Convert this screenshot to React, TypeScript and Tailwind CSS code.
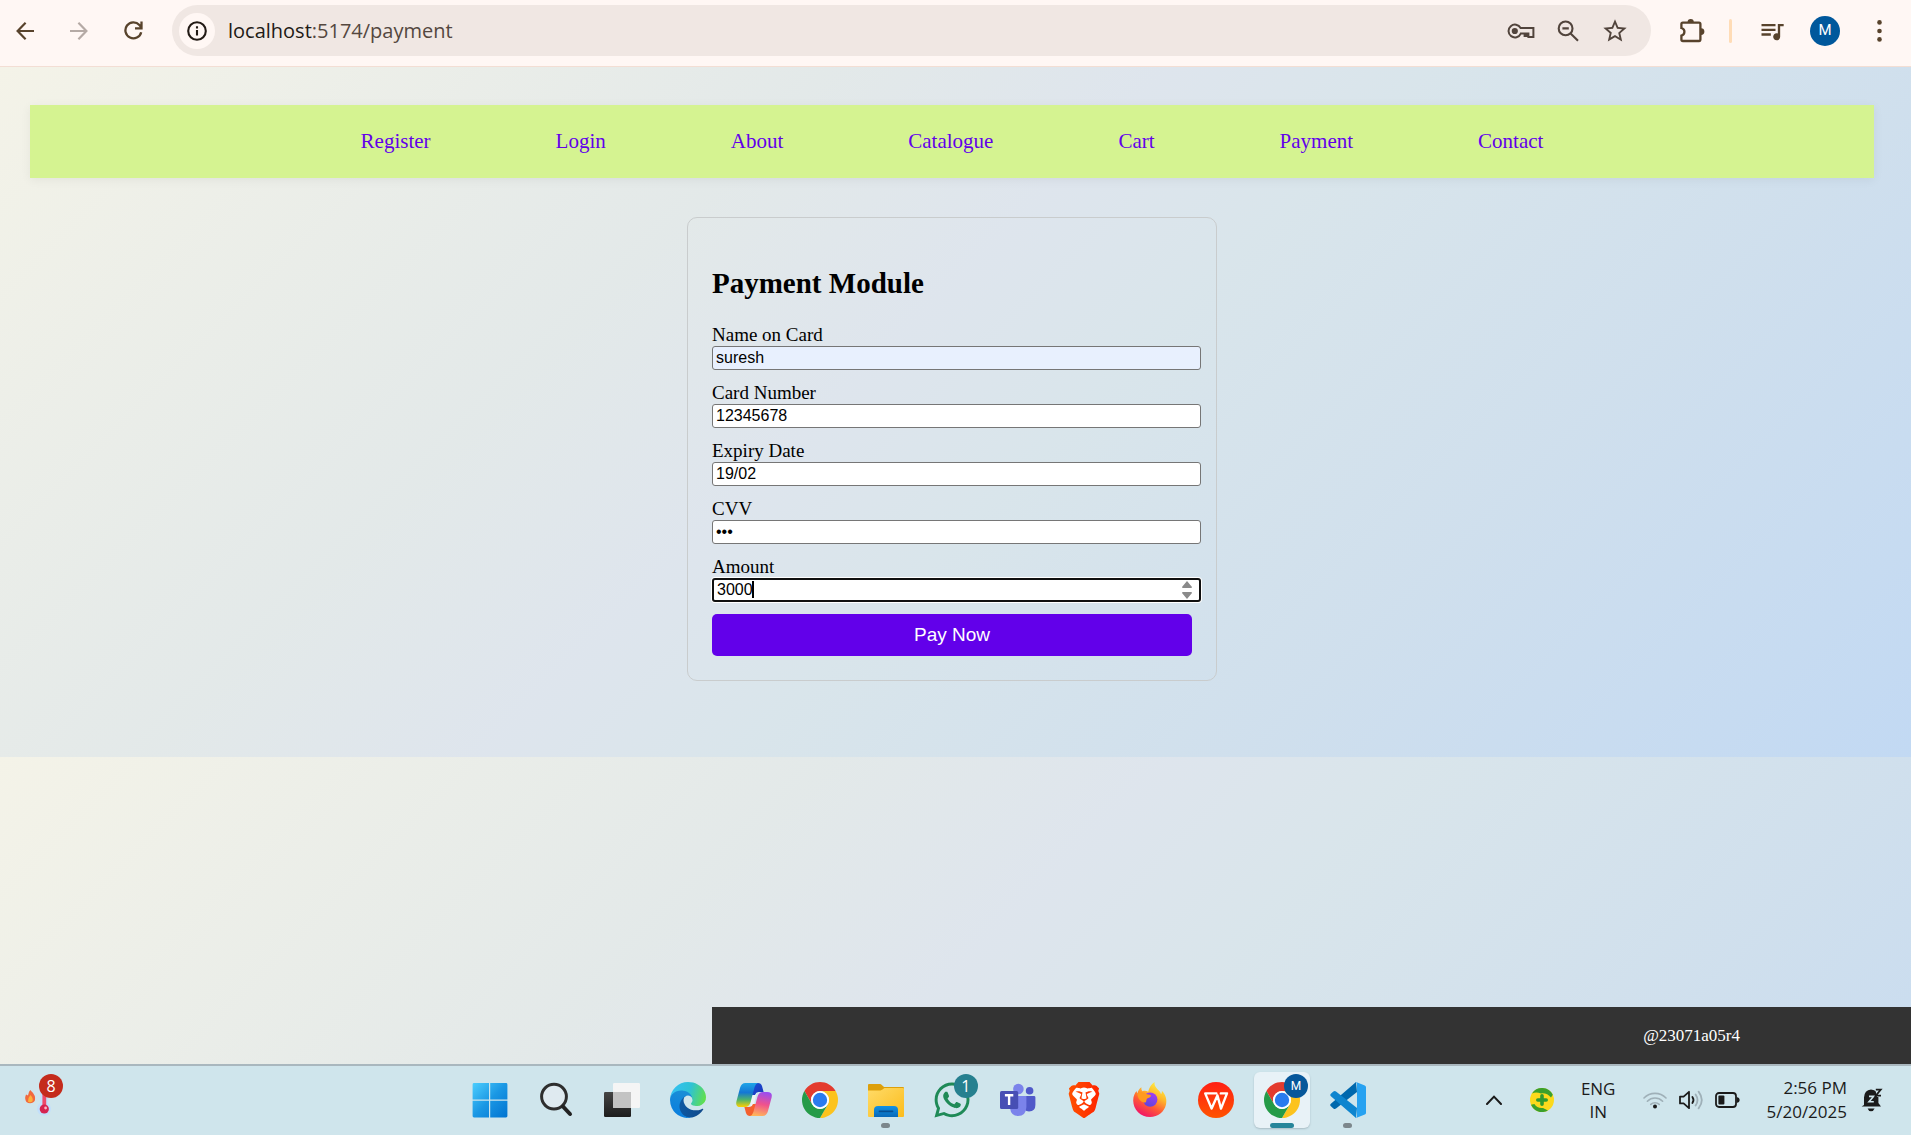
import { useState } from 'react';
import type { ReactNode } from 'react';
import { FaWhatsapp } from 'react-icons/fa';
import { SiBrave } from 'react-icons/si';
import { MdQueueMusic, MdStarBorder } from 'react-icons/md';

const links = ['Register', 'Login', 'About', 'Catalogue', 'Cart', 'Payment', 'Contact'];

const fields = [
  { id: 'name', label: 'Name on Card', type: 'text', value: 'suresh', look: 'bg-[#e8f0fe] border border-[#767676]' },
  { id: 'number', label: 'Card Number', type: 'text', value: '12345678', look: 'bg-white border border-[#767676]' },
  { id: 'expiry', label: 'Expiry Date', type: 'text', value: '19/02', look: 'bg-white border border-[#767676]' },
  { id: 'cvv', label: 'CVV', type: 'password', value: '123', look: 'bg-white border border-[#767676]' },
  { id: 'amount', label: 'Amount', type: 'number', value: '3000', look: 'bg-white border-2 border-[#101010] ring-1 ring-white' },
];

function ChromeLogo() {
  return (
    <svg viewBox="0 0 48 48" className="size-9">
      <path d="M24 12H44.78A24 24 0 0 0 3.22 12L13.61 30A12 12 0 0 1 24 12" fill="#e33b2e" />
      <path d="M24 12H44.78A24 24 0 0 1 24 48L34.39 30A12 12 0 0 0 24 12" fill="#fcc31e" />
      <path d="M13.61 30L3.22 12A24 24 0 0 0 24 48L34.39 30A12 12 0 0 1 13.61 30" fill="#259b48" />
      <circle cx="24" cy="24" r="12" fill="#fff" />
      <circle cx="24" cy="24" r="9.6" fill="#2a7bee" />
    </svg>
  );
}

function WindowsLogo() {
  return (
    <svg viewBox="0 0 36 36" className="size-9">
      <defs>
        <linearGradient id="win" x1="0" y1="0" x2="36" y2="36" gradientUnits="userSpaceOnUse">
          <stop stopColor="#4fd0ff" />
          <stop offset="0.5" stopColor="#1a97e4" />
          <stop offset="1" stopColor="#0072d0" />
        </linearGradient>
      </defs>
      <path
        d="M2 1H17V17.4H.6V2.4Q.6 1 2 1ZM18.2 1H34Q35.4 1 35.4 2.4V17.4H18.2ZM.6 18.8H17V35.4H2Q.6 35.4 .6 34ZM18.2 18.8H35.4V34Q35.4 35.4 34 35.4H18.2Z"
        fill="url(#win)"
      />
    </svg>
  );
}

function SearchLogo() {
  return (
    <svg viewBox="0 0 36 36" className="size-9" fill="none">
      <circle cx="16" cy="14.6" r="12.4" fill="#dfeaf0" stroke="#2e2e2e" strokeWidth="3" />
      <path d="M25 24.5L32 32" stroke="#222" strokeWidth="4" strokeLinecap="round" />
    </svg>
  );
}

function TaskViewLogo() {
  return (
    <svg viewBox="0 0 36 36" className="size-9">
      <defs>
        <linearGradient id="tv" x1="0" y1="0" x2="0" y2="1">
          <stop stopColor="#454545" />
          <stop offset="1" stopColor="#1c1c1c" />
        </linearGradient>
      </defs>
      <rect x="0" y="10" width="27" height="25" rx="1.2" fill="url(#tv)" />
      <rect x="9" y="1" width="27" height="25" rx="1.2" fill="#f5f5f5" />
      <path d="M9 10H27V26H10Q9 26 9 25Z" fill="#c3c3c3" />
    </svg>
  );
}

function EdgeLogo() {
  return (
    <svg viewBox="4.63 4.92 256 256" className="size-9">
      <defs>
        <linearGradient id="ea" x1="60" y1="180" x2="240" y2="180" gradientUnits="userSpaceOnUse">
          <stop stopColor="#0c59a4" />
          <stop offset="1" stopColor="#114a8b" />
        </linearGradient>
        <linearGradient id="eb" x1="120" y1="60" x2="60" y2="240" gradientUnits="userSpaceOnUse">
          <stop stopColor="#1b8fd6" />
          <stop offset="1" stopColor="#0a7fde" />
        </linearGradient>
        <linearGradient id="ec" x1="20" y1="60" x2="255" y2="130" gradientUnits="userSpaceOnUse">
          <stop stopColor="#35c1f1" />
          <stop offset="0.5" stopColor="#2fc2d4" />
          <stop offset="1" stopColor="#62e04a" />
        </linearGradient>
      </defs>
      <path fill="url(#ea)" d="M235.68 195.46a93.73 93.73 0 0 1-10.54 4.71 101.87 101.87 0 0 1-35.9 6.46c-47.32 0-88.54-32.55-88.54-74.32A31.48 31.48 0 0 1 117.13 105c-42.8 1.8-53.8 46.4-53.8 72.53 0 73.88 68.09 81.37 82.76 81.37 7.91 0 19.84-2.3 27-4.56l1.31-.44a128.34 128.34 0 0 0 66.6-52.8 4 4 0 0 0-5.32-5.64Z" />
      <path fill="url(#eb)" d="M110.34 246.34A79.2 79.2 0 0 1 87.6 225a80.72 80.72 0 0 1 29.53-120c3.12-1.47 8.45-4.13 15.54-4a32.35 32.35 0 0 1 25.69 13 31.88 31.88 0 0 1 6.36 18.66c0-.21 24.46-79.6-80-79.6-43.9 0-80 41.66-80 78.21a130.15 130.15 0 0 0 12.11 56 128 128 0 0 0 156.38 67.11 75.55 75.55 0 0 1-62.78-8Z" />
      <path fill="url(#ec)" d="M156.94 153.78c-.81 1.05-3.3 2.5-3.3 5.66 0 2.61 1.7 5.12 4.72 7.23 14.38 10 41.49 8.68 41.56 8.68a59.56 59.56 0 0 0 30.27-8.35 61.38 61.38 0 0 0 30.43-52.88c.26-22.41-8-37.31-11.34-43.91C228.09 28.76 182.35 4.92 132.61 4.92a128 128 0 0 0-128 126.2c.48-36.54 36.8-66.05 80-66.05 3.5 0 23.46.34 42 10.07 16.34 8.58 24.9 18.94 30.85 29.21 6.18 10.67 7.28 24.15 7.28 29.52s-2.74 13.33-7.8 19.91Z" />
    </svg>
  );
}

function CopilotLogo() {
  return (
    <svg viewBox="0 0 36 36" className="size-9">
      <defs>
        <linearGradient id="ca" x1="0" y1="0" x2="0" y2="1">
          <stop stopColor="#1fa5e8" />
          <stop offset="0.4" stopColor="#1477d4" />
          <stop offset="0.7" stopColor="#4fb46a" />
          <stop offset="1" stopColor="#ffd000" />
        </linearGradient>
        <linearGradient id="cb" x1="0.6" y1="0" x2="0.4" y2="1">
          <stop stopColor="#9a4df0" />
          <stop offset="0.5" stopColor="#f0528c" />
          <stop offset="1" stopColor="#ffb45a" />
        </linearGradient>
        <linearGradient id="cc" x1="0" y1="0" x2="1" y2="1">
          <stop stopColor="#1a50d8" />
          <stop offset="1" stopColor="#1b36b8" />
        </linearGradient>
      </defs>
      <path d="M16 11H20.6L17.4 25H14Z" fill="#eef3f7" />
      <path d="M17 1H22Q25 1 26 4L27.6 10H22.4Q20 10 19 13H15Z" fill="url(#cc)" />
      <path d="M19 34H14Q11 34 10 31L8.4 25H13.6Q16 25 17 22H21Z" fill="#f4602e" />
      <path d="M9.4 1H22Q19.6 1.6 18.6 5L14.6 20Q13.2 25 9 25H4.6Q-.8 25 .4 19.6L4 6Q5.4 1 9.4 1Z" fill="url(#ca)" />
      <path d="M26.6 34H14Q16.4 33.4 17.4 30L21.4 15Q22.8 10 27 10H31.4Q36.8 10 35.6 15.4L32 29Q30.6 34 26.6 34Z" fill="url(#cb)" />
    </svg>
  );
}

function FolderLogo() {
  return (
    <svg viewBox="0 0 36 36" className="size-9">
      <defs>
        <linearGradient id="fo" x1="0" y1="0" x2="1" y2="1">
          <stop stopColor="#ffdb68" />
          <stop offset="1" stopColor="#fbbc1c" />
        </linearGradient>
        <linearGradient id="fb" x1="0" y1="0" x2="0" y2="1">
          <stop stopColor="#1292e4" />
          <stop offset="1" stopColor="#0968b8" />
        </linearGradient>
      </defs>
      <path d="M0 3Q0 2 1 2H12Q13 2 13.8 3L16 5H35Q36 5 36 6V14H0Z" fill="#dd9f0a" />
      <path d="M0 8.4H12.5Q13.6 8.4 14.5 7.6L16.4 6H35Q36 6 36 7V34Q36 35 35 35H1Q0 35 0 34Z" fill="url(#fo)" />
      <path d="M6 35V28Q6 24 10 24H26Q30 24 30 28V35Z" fill="url(#fb)" />
      <path d="M11.5 29.3H24.5" stroke="#074f92" strokeWidth="1.8" strokeLinecap="round" />
    </svg>
  );
}

function TeamsLogo() {
  return (
    <svg viewBox="0 0 36 36" className="size-9">
      <circle cx="29.6" cy="8.8" r="3.8" fill="#5059c9" />
      <path d="M25 14H34Q35.4 14 35.4 15.4V23Q35.4 29.4 29 29.4Q26 29.4 25 28Z" fill="#5059c9" />
      <circle cx="18.4" cy="7" r="5.3" fill="#7b83eb" />
      <path d="M10 14H26.4V25Q26 34 18 34Q11 34 10 26Z" fill="#7b83eb" />
      <rect x="0" y="9" width="18.2" height="18" rx="1.6" fill="#474fb4" />
      <path d="M4.9 13.2H13.3M9.1 13.2V23" stroke="#fff" strokeWidth="2.4" />
    </svg>
  );
}

function BraveLogo() {
  return (
    <div className="relative grid size-9 place-items-center">
      <svg viewBox="0 0 36 36" className="absolute size-9">
        <defs>
          <linearGradient id="br" x1="0" y1="0" x2="24" y2="0" gradientUnits="userSpaceOnUse">
            <stop stopColor="#ff5500" />
            <stop offset="1" stopColor="#ff2000" />
          </linearGradient>
        </defs>
        <path d="M10 4H26L30 10L27 25L18 32L9 25L6 10Z" fill="#fff" />
      </svg>
      <SiBrave className="relative size-9" fill="url(#br)" />
    </div>
  );
}

function FirefoxLogo() {
  return (
    <svg viewBox="0 0 36 36" className="size-9">
      <defs>
        <linearGradient id="fa" x1="28" y1="2" x2="10" y2="34" gradientUnits="userSpaceOnUse">
          <stop stopColor="#fff044" />
          <stop offset="0.35" stopColor="#ffb52a" />
          <stop offset="0.65" stopColor="#ff5a36" />
          <stop offset="1" stopColor="#f01268" />
        </linearGradient>
        <linearGradient id="fp" x1="0.8" y1="0" x2="0.3" y2="1">
          <stop stopColor="#a63df2" />
          <stop offset="1" stopColor="#5b45dc" />
        </linearGradient>
      </defs>
      <path
        d="M22.6 0C22 3.5 24 5.8 26.8 8.4C28.2 9.8 28.8 11 29 12.2C30 11 30 9.6 29.8 8.8C34 13 35 18 34 22.6C32.4 30 26 35 18 35C8.6 35 1.2 27.6 1.2 18.4C1.2 14 3 10.6 4.6 9C4.7 10 5 10.8 5.4 11.4C6 8.6 7.6 6.4 9.4 5.2C9.2 7 9.6 8.4 10.6 9.2C12.6 8.6 14.6 8.8 16.2 9.8C17 5.6 19.6 1.8 22.6 0Z"
        fill="url(#fa)"
      />
      <circle cx="18.2" cy="17.6" r="7.2" fill="url(#fp)" />
      <path d="M5.4 11.4C8 9.4 11.6 10 13.4 11.6C15.4 13 18.6 12.2 19 13.8C19 15.6 15.4 15.8 14.6 17.4C13.8 19.6 14.8 20.6 12.4 20.4C8 19.8 5.6 16 5.4 11.4Z" fill="#ff9a1f" />
    </svg>
  );
}

function WpsLogo() {
  return (
    <svg viewBox="0 0 36 36" className="size-9" fill="none">
      <defs>
        <linearGradient id="wp" x1="0" y1="0" x2="0" y2="1">
          <stop stopColor="#ff1f14" />
          <stop offset="1" stopColor="#ff5300" />
        </linearGradient>
      </defs>
      <circle cx="18" cy="18" r="18" fill="url(#wp)" />
      <path d="M18.4 11.4H7.2L13.6 26.6L19.4 13.4L23 26.6L29 11.4H22.8" stroke="#fff" strokeWidth="2.4" strokeLinejoin="round" strokeLinecap="round" />
    </svg>
  );
}

function CodeLogo() {
  return (
    <svg viewBox="0 0 36 36" className="size-9">
      <path d="M26 0L27 10L6 26.6Q4.8 27.6 3.4 26.5L.9 24.2Q-.4 22.9 .9 21.7Z" fill="#0068ad" />
      <path d="M26 36L27 26L6 9.4Q4.8 8.4 3.4 9.5L.9 11.8Q-.4 13.1 .9 14.3Z" fill="#0e85cf" />
      <path d="M26 0L34.8 3.4Q36 4 36 5.3V30.7Q36 32 34.8 32.6L26 36Q27 35 27 33.5V2.5Q27 1 26 0Z" fill="#27a2f1" />
    </svg>
  );
}

function TaskItem({ name, children, running, active, badge }: { name: string; children: ReactNode; running?: boolean; active?: boolean; badge?: ReactNode }) {
  return (
    <li className="flex w-[66px] justify-center">
      <button
        type="button"
        aria-label={name}
        className={active ? 'relative grid size-14 place-items-center rounded-md bg-[#e8f2f7] shadow-[0_1px_2px_#a9bcc4]' : 'relative grid size-14 place-items-center'}
      >
        {children}
        {badge}
        {active && <span className="absolute bottom-0 h-[5px] w-6 rounded-full bg-[#26859a]" />}
        {running && <span className="absolute bottom-0 h-[5px] w-[9px] rounded-full bg-[#7c878c]" />}
      </button>
    </li>
  );
}

function BrowserBar() {
  return (
    <header className="flex h-[67px] shrink-0 items-center border-b border-[#f3ded4] bg-[#fff7f4] pt-[5px] pb-[10px] pl-4 font-['Open_Sans',sans-serif]">
      <div className="flex w-[156px] items-center gap-9">
        <button type="button" aria-label="Back">
          <svg viewBox="0 0 18 18" className="size-[18px]" fill="none" stroke="#58432c" strokeWidth="2.2"><path d="M9.6 .8L1.6 9L9.6 17.2M1.8 9H18" /></svg>
        </button>
        <button type="button" aria-label="Forward">
          <svg viewBox="0 0 18 18" className="size-[18px]" fill="none" stroke="#b5aaa5" strokeWidth="2.2"><path d="M8.4 .8L16.4 9L8.4 17.2M16.2 9H0" /></svg>
        </button>
        <button type="button" aria-label="Reload">
          <svg viewBox="0 0 19 19" className="size-[19px]" fill="none" stroke="#58432c" strokeWidth="2.3"><path d="M17.2 11.2A8 8 0 1 1 15.4 4L17 6M11 7.3H17.5V.4" /></svg>
        </button>
      </div>
      <div className="flex h-[51px] flex-1 items-center rounded-full bg-[#f0e7e3] pr-[22px] pl-[7px]">
        <button type="button" aria-label="Site information" className="grid size-9 place-items-center rounded-full bg-[#fff7f4]">
          <svg viewBox="0 0 20 20" className="size-5" fill="none" stroke="#221a15" strokeWidth="2.1"><circle cx="10" cy="10" r="8.8" /><path d="M10 9V14.6M10 5.2V7.4" /></svg>
        </button>
        <div className="flex-1 pl-[13px] text-[20px] leading-7 text-[#54473f]">
          <span className="text-[#221a15]">localhost</span>:5174/payment
        </div>
        <div className="flex items-center gap-[22px] text-[#51443c]">
          <button type="button" aria-label="Passwords">
            <svg viewBox="0 0 28 16" className="h-4 w-7" fill="none" stroke="#51443c" strokeWidth="2"><path d="M13.6 5H26.4V14H21.4V10.6H19.4V13H17.6V10.6H13.8A6.4 6.4 0 1 1 13.6 5Z" /><circle cx="7.8" cy="8" r="3.1" fill="#51443c" stroke="none" /></svg>
          </button>
          <button type="button" aria-label="Zoom">
            <svg viewBox="0 0 22 22" className="size-[22px]" fill="none" stroke="#51443c" strokeWidth="2.1"><circle cx="8.6" cy="8.4" r="6.9" /><path d="M5.4 8.4H11.8M13.6 13.4L21 20.8" /></svg>
          </button>
          <button type="button" aria-label="Bookmark"><MdStarBorder className="size-7" /></button>
        </div>
      </div>
      <div className="flex items-center pl-7 text-[#58432c]">
        <button type="button" aria-label="Extensions">
          <svg viewBox="0 0 26 26" className="size-[26px]"><path d="M3.8 4.6H20Q21.4 4.6 21.4 6V21.6Q21.4 23 20 23H4Q2.4 23 2.4 21.4V17.6A3.9 3.9 0 0 0 2.4 10V6Q2.4 4.6 3.8 4.6Z" fill="none" stroke="#58432c" strokeWidth="2.3" /><path d="M8.6 4A3.1 3.1 0 0 1 14.8 4ZM22 10.2A3 3 0 0 1 22 17Z" fill="#58432c" /></svg>
        </button>
        <span className="ml-6 h-6 w-[3px] rounded-full bg-[#ffdcb6]" />
        <button type="button" aria-label="Media" className="ml-[26px]"><MdQueueMusic className="size-7" /></button>
        <button type="button" aria-label="Profile" className="ml-6 grid size-[30px] place-items-center rounded-full bg-[#00589c] font-['Roboto',sans-serif] text-[15px] text-white">M</button>
        <button type="button" aria-label="Menu" className="mr-[29px] ml-[37px]">
          <svg viewBox="0 0 5 22" className="h-[22px] w-[5px]" fill="#58432c"><circle cx="2.5" cy="2.4" r="2.3" /><circle cx="2.5" cy="11" r="2.3" /><circle cx="2.5" cy="19.4" r="2.3" /></svg>
        </button>
      </div>
    </header>
  );
}

function PaymentForm() {
  const [values, setValues] = useState<Record<string, string>>(Object.fromEntries(fields.map((f) => [f.id, f.value])));
  return (
    <form className="mx-auto mt-[39px] w-[530px] rounded-[10px] border border-[#c9cccd] p-6 text-black" onSubmit={(e) => e.preventDefault()}>
      <h2 className="mt-[25px] text-[29px] leading-[33px] font-bold">Payment Module</h2>
      <div className="mt-6 flex flex-col gap-3">
        {fields.map((f) => (
          <div key={f.id} className="flex w-[489px] flex-col">
            <label htmlFor={f.id} className="text-[19px] leading-[22px]">{f.label}</label>
            <div className="relative flex">
              <input
                id={f.id}
                type={f.type}
                value={values[f.id]}
                onChange={(e) => setValues({ ...values, [f.id]: e.target.value })}
                className={`h-6 w-full appearance-none rounded-[3px] px-[3px] font-['Liberation_Sans',Arial,sans-serif] text-[16px] leading-[18px] text-black outline-none [&::-webkit-inner-spin-button]:appearance-none ${f.look}`}
              />
              {f.type === 'number' && (
                <>
                  <span className="absolute top-[3px] left-10 h-[17px] w-[2px] bg-black" />
                  <svg viewBox="0 0 10 18" className="absolute top-[3px] right-[9px] h-[18px] w-[10px]" fill="#8a8a8a">
                    <path d="M5 0L10 6Q10 7 9 7H1Q0 7 0 6ZM5 18L0 12Q0 11 1 11H9Q10 11 10 12Z" />
                  </svg>
                </>
              )}
            </div>
          </div>
        ))}
        <button type="submit" className="h-[42px] w-full rounded-[5px] bg-[#6200ea] font-['Liberation_Sans',Arial,sans-serif] text-[19px] text-white">Pay Now</button>
      </div>
    </form>
  );
}

function Taskbar() {
  return (
    <footer className="flex h-[71px] shrink-0 items-center border-t-2 border-[#a9b7be] bg-[#cfe5ec] pb-[2px] font-['Open_Sans',sans-serif] text-[#1b1b1b]">
      <div className="flex-1 pb-2 pl-6">
        <button type="button" aria-label="Weather alerts" className="relative block h-11 w-10">
          <svg viewBox="0 0 40 44" className="h-11 w-10">
            <path d="M16 10V29A7 7 0 1 0 24 29V10Z" fill="#c2dffb" />
            <path d="M18.4 10H22.2V31H18.4Z" fill="#ee4a6a" />
            <circle cx="20.3" cy="35" r="4.6" fill="#d52350" />
            <circle cx="21.6" cy="34" r="1.4" fill="#ffb3c4" />
            <path d="M6.2 16Q9 18.4 10.8 22Q12 27 9 28.6Q5.6 30.4 2.4 28Q.2 25 2 20.6L4 21.4Q4.4 18 6.2 16Z" fill="#f26a3d" />
            <path d="M6.4 21Q9.4 24 8.6 27Q6.4 29.4 4 27.4Q3.8 24 6.4 21Z" fill="#ffb13b" />
          </svg>
          <span className="absolute top-0 left-[15px] grid size-6 place-items-center rounded-full bg-[#c42b1c] text-[16px] leading-none text-white">8</span>
        </button>
      </div>
      <ul className="flex">
        <TaskItem name="Start"><WindowsLogo /></TaskItem>
        <TaskItem name="Search"><SearchLogo /></TaskItem>
        <TaskItem name="Task view"><TaskViewLogo /></TaskItem>
        <TaskItem name="Edge"><EdgeLogo /></TaskItem>
        <TaskItem name="Copilot"><CopilotLogo /></TaskItem>
        <TaskItem name="Chrome"><ChromeLogo /></TaskItem>
        <TaskItem name="File Explorer" running><FolderLogo /></TaskItem>
        <TaskItem
          name="WhatsApp"
          badge={<span className="absolute top-[2px] right-[2px] grid size-6 place-items-center rounded-full bg-[#26808f] text-[16px] leading-none text-white">1</span>}
        >
          <FaWhatsapp className="size-10 text-[#1f8a57]" />
        </TaskItem>
        <TaskItem name="Teams"><TeamsLogo /></TaskItem>
        <TaskItem name="Brave"><BraveLogo /></TaskItem>
        <TaskItem name="Firefox"><FirefoxLogo /></TaskItem>
        <TaskItem name="WPS Office"><WpsLogo /></TaskItem>
        <TaskItem
          name="Chrome profile"
          active
          badge={<span className="absolute top-[2px] right-[2px] grid size-6 place-items-center rounded-full bg-[#07579a] font-['Roboto',sans-serif] text-[12px] leading-none text-white">M</span>}
        >
          <ChromeLogo />
        </TaskItem>
        <TaskItem name="Visual Studio Code" running><CodeLogo /></TaskItem>
      </ul>
      <div className="flex items-center pr-7 pl-[105px] text-[17px] leading-6">
        <svg viewBox="0 0 16 10" className="h-[10px] w-4" fill="none" stroke="#1b1b1b" strokeWidth="2" strokeLinecap="round"><path d="M1 9L8 1.6L15 9" /></svg>
        <svg viewBox="0 0 24 24" className="ml-7 size-6">
          <circle cx="12" cy="12" r="12" fill="#fbd91c" />
          <path d="M2 5.4A12 12 0 0 1 22.8 6.8L21 9.6Q17 4.6 11 5.4Q6 3.6 2 5.4ZM1 16.8L4.4 16Q7 20.6 13 20L18 22.4A12 12 0 0 1 1 16.8Z" fill="#3aa02c" />
          <path d="M12 7.8V16.2M7.8 12H16.2" stroke="#2f9a2f" strokeWidth="3.6" strokeLinecap="round" />
        </svg>
        <div className="ml-[27px] text-center leading-[23px]">ENG<br />IN</div>
        <svg viewBox="0 0 24 18" className="ml-[28px] h-[18px] w-6" fill="none" stroke="#9fb0b8" strokeWidth="1.6" strokeLinecap="round"><path d="M1 7A15.4 15.4 0 0 1 23 7M4.4 10.2A10.6 10.6 0 0 1 19.6 10.2M7.8 13.4A6 6 0 0 1 16.2 13.4" /><circle cx="12" cy="15.6" r="2" fill="#1b1b1b" stroke="none" /></svg>
        <svg viewBox="0 0 24 20" className="ml-3 h-5 w-6" fill="none" stroke="#1b1b1b" strokeWidth="1.8" strokeLinejoin="round" strokeLinecap="round"><path d="M1 6.6H4.6L10 1.8V18.2L4.6 13.4H1ZM13.4 7Q15.6 10 13.4 13" /><path d="M16.6 4.4Q20.4 10 16.6 15.6M19.6 1.6Q26 10 19.6 18.4" stroke="#9fb0b8" /></svg>
        <svg viewBox="0 0 25 16" className="ml-3 h-4 w-[25px]"><rect x="1" y="1" width="20" height="14" rx="3" fill="none" stroke="#1b1b1b" strokeWidth="1.8" /><rect x="3.4" y="3.4" width="6" height="9.2" rx="1" fill="#1b1b1b" /><path d="M21.6 5Q24.6 5.6 24.6 8Q24.6 10.4 21.6 11Z" fill="#1b1b1b" /></svg>
        <div className="ml-[26px] text-right">2:56 PM<br />5/20/2025</div>
        <svg viewBox="0 0 22 24" className="ml-[14px] h-6 w-[22px]" fill="none">
          <path d="M3 17V9.4Q3.4 2.4 10 1.6Q17 2.4 17.4 9.4V15L20 18.4H.6Z" fill="#1b1b1b" />
          <path d="M6.6 20.4H13.6Q12.6 23.2 10 23.2Q7.6 23.2 6.6 20.4Z" fill="#1b1b1b" />
          <path d="M8 8.4H12.6L8 13.8H12.8" stroke="#cfe5ec" strokeWidth="1.6" />
          <path d="M14 0H21V9H16Z" fill="#cfe5ec" />
          <path d="M14.8 1.6H19.8L14.8 7.6H20" stroke="#1b1b1b" strokeWidth="1.7" />
        </svg>
      </div>
    </footer>
  );
}

export default function App() {
  return (
    <div className="flex min-h-screen flex-col">
      <BrowserBar />
      <main className="flex flex-1 flex-col bg-[linear-gradient(135deg,#f4f3e8_0%,#e3e9e9_32%,#dee5ed_45%,#d9e5eb_55%,#cfdfed_75%,#c2d9f3_100%)] bg-[length:100%_690px] font-['Liberation_Serif',serif]">
        <nav className="mt-[38px] mr-[37px] ml-[30px] flex h-[73px] items-center justify-center gap-[125px] bg-[#d5f391] text-[21px] text-[#6200ea] shadow-[0_2px_10px_rgba(0,0,0,0.06)]">
          {links.map((l) => (
            <a key={l} href={`/${l.toLowerCase()}`}>{l}</a>
          ))}
        </nav>
        <div className="mr-[37px] ml-[30px]">
          <PaymentForm />
        </div>
        <div className="mt-auto ml-[712px] flex h-[57px] items-center justify-end bg-[#333333] pr-[171px] text-[17px] text-white">
          <p>@23071a05r4</p>
        </div>
      </main>
      <Taskbar />
    </div>
  );
}
